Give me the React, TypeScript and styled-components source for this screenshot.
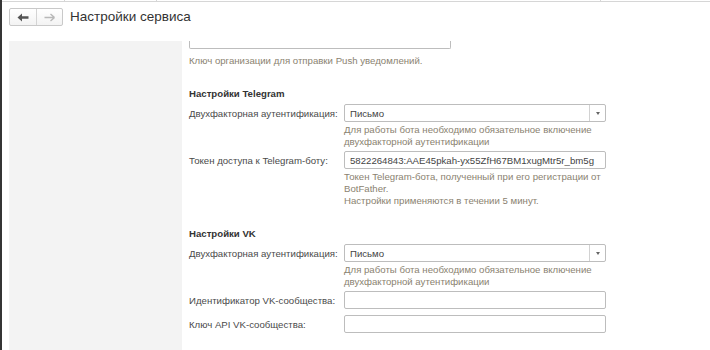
import React from "react";
import styled, { createGlobalStyle } from "styled-components";

const Global = createGlobalStyle`
  html, body { margin: 0; padding: 0; background: #fff; }
  body { font-family: "Liberation Sans", Arial, sans-serif; font-size: 9.65px; color: #4a4a4a; }
  * { box-sizing: border-box; }
`;

const Page = styled.div`
  width: 710px;
  height: 350px;
  border-left: 2px solid #353535;
  display: flex;
  flex-direction: column;
  overflow: hidden;
`;

const TabStrip = styled.div`
  display: flex;
  height: 2px;
  border-bottom: 1px solid #d6d6d6;
`;

const TabEdge = styled.div<{ $w: number }>`
  width: ${(p) => p.$w}px;
  border-right: 1px solid #d6d6d6;
`;

const Header = styled.div`
  height: 39px;
  display: flex;
  align-items: flex-start;
  padding: 6px 0 0 7px;
  gap: 7px;
`;

const NavGroup = styled.div`
  display: flex;
  height: 18px;
  border: 1px solid #c9c9c9;
  border-radius: 2px;
  background: linear-gradient(#ffffff, #f3f3f3);
`;

const NavButton = styled.div<{ $first?: boolean }>`
  width: ${(p) => (p.$first ? 27 : 25)}px;
  display: flex;
  align-items: center;
  justify-content: center;
  border-right: ${(p) => (p.$first ? "1px solid #d4d4d4" : "none")};
`;

const Title = styled.div`
  font-size: 13.5px;
  color: #333;
  line-height: 20px;
  margin-top: -1px;
`;

const Body = styled.div`
  flex: 1;
  display: flex;
  gap: 7px;
  padding-left: 7px;
  min-height: 0;
`;

const Sidebar = styled.div`
  width: 173px;
  background: #f3f3f3;
`;

const Content = styled.div`
  display: flex;
  flex-direction: column;
  width: 420px;
`;

const CutInput = styled.div`
  width: 262px;
  height: 8px;
  border: 1px solid #bdbdbd;
  border-top: none;
  border-radius: 0 0 2px 2px;
`;

const Hint = styled.div<{ $indent?: boolean }>`
  color: #8a8270;
  line-height: 12px;
  margin-top: ${(p) => (p.$indent ? 2 : 6)}px;
  margin-left: ${(p) => (p.$indent ? 155 : 0)}px;
  width: ${(p) => (p.$indent ? 265 : 420)}px;
`;

const SectionTitle = styled.div`
  font-weight: bold;
  color: #333;
  line-height: 12px;
  margin-top: 18px;
  margin-bottom: 4px;
`;

const Field = styled.div<{ $plain?: boolean }>`
  display: flex;
  flex-direction: column;
  margin-bottom: ${(p) => (p.$plain ? 6 : 3)}px;
`;

const Row = styled.div`
  display: flex;
  align-items: center;
  height: 18px;
`;

const Label = styled.div`
  width: 155px;
  color: #4a4a4a;
  white-space: nowrap;
`;

const InputBox = styled.div`
  width: 262px;
  height: 18px;
  border: 1px solid #bdbdbd;
  border-radius: 2px;
  display: flex;
  align-items: center;
  color: #444;
  padding-left: 5px;
  background: #fff;
  white-space: nowrap;
  overflow: hidden;
`;

const SelectBox = styled(InputBox)`
  padding-left: 0;
`;

const SelectValue = styled.div`
  flex: 1;
  padding-left: 5px;
`;

const SelectButton = styled.div`
  width: 16px;
  height: 100%;
  border-left: 1px solid #d2d2d2;
  display: flex;
  align-items: center;
  justify-content: center;
`;

const Arrow = styled.div`
  width: 0;
  height: 0;
  border-left: 2.5px solid transparent;
  border-right: 2.5px solid transparent;
  border-top: 3px solid #666;
`;

const BackIcon = () => (
  <svg width="12" height="9" viewBox="0 0 12 9">
    <path d="M0.5 4.5 L5 0.5 L5 3.3 L11.5 3.3 L11.5 5.7 L5 5.7 L5 8.5 Z" fill="#555" />
  </svg>
);

const FwdIcon = () => (
  <svg width="11" height="9" viewBox="0 0 11 9">
    <path d="M10.5 4.5 L6.5 1 M10.5 4.5 L6.5 8 M10.5 4.5 L0.5 4.5" stroke="#b8b8b8" strokeWidth="1.4" fill="none" />
  </svg>
);

const Select = ({ value }: { value: string }) => (
  <SelectBox>
    <SelectValue>{value}</SelectValue>
    <SelectButton>
      <Arrow />
    </SelectButton>
  </SelectBox>
);

export default function App() {
  return (
    <>
      <Global />
      <Page>
        <TabStrip>
          <TabEdge $w={63} />
          <TabEdge $w={92} />
          <TabEdge $w={444} />
        </TabStrip>
        <Header>
          <NavGroup>
            <NavButton $first>
              <BackIcon />
            </NavButton>
            <NavButton>
              <FwdIcon />
            </NavButton>
          </NavGroup>
          <Title>Настройки сервиса</Title>
        </Header>
        <Body>
          <Sidebar />
          <Content>
            <Field>
              <CutInput />
              <Hint>Ключ организации для отправки Push уведомлений.</Hint>
            </Field>

            <SectionTitle>Настройки Telegram</SectionTitle>
            <Field>
              <Row>
                <Label>Двухфакторная аутентификация:</Label>
                <Select value="Письмо" />
              </Row>
              <Hint $indent>
                Для работы бота необходимо обязательное включение двухфакторной аутентификации
              </Hint>
            </Field>
            <Field>
              <Row>
                <Label>Токен доступа к Telegram-боту:</Label>
                <InputBox>5822264843:AAE45pkah-yx55ZfH67BM1xugMtr5r_bm5g</InputBox>
              </Row>
              <Hint $indent>
                Токен Telegram-бота, полученный при его регистрации от BotFather.
                <br />
                Настройки применяются в течении 5 минут.
              </Hint>
            </Field>

            <SectionTitle>Настройки VK</SectionTitle>
            <Field>
              <Row>
                <Label>Двухфакторная аутентификация:</Label>
                <Select value="Письмо" />
              </Row>
              <Hint $indent>
                Для работы бота необходимо обязательное включение двухфакторной аутентификации
              </Hint>
            </Field>
            <Field $plain>
              <Row>
                <Label>Идентификатор VK-сообщества:</Label>
                <InputBox />
              </Row>
            </Field>
            <Field $plain>
              <Row>
                <Label>Ключ API VK-сообщества:</Label>
                <InputBox />
              </Row>
            </Field>
          </Content>
        </Body>
      </Page>
    </>
  );
}
